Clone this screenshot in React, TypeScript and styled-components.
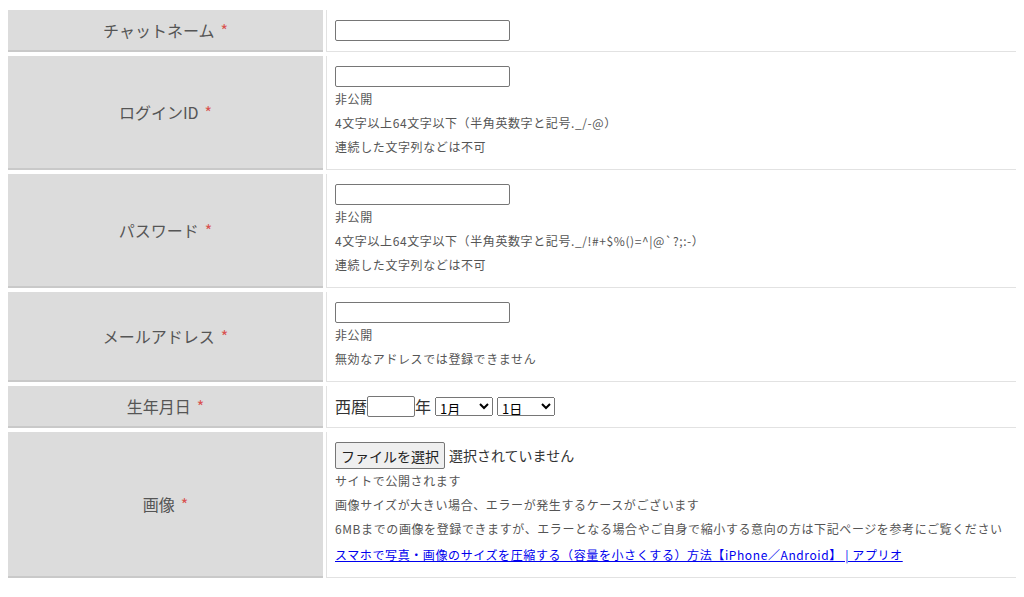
import React from "react";
import styled, { createGlobalStyle } from "styled-components";

const Global = createGlobalStyle`
  body { margin: 8px; background: #fff; font-family: "Noto Sans CJK JP", "Noto Sans", sans-serif; color: #444; }
`;
const Table = styled.table`
  border-spacing: 3px 4px;
  margin-top: -2px;
  margin-left: -3px;
  width: calc(100% + 9px);
`;
const Th = styled.th`
  width: 313px;
  background: #dcdcdc;
  border-bottom: 2px solid #c9c9c9;
  font-weight: normal;
  font-size: 16px;
  color: #555;
  text-align: center;
  vertical-align: middle;
`;
const Req = styled.span`
  color: #d9534f;
  margin-left: 6px;
`;
const Td = styled.td`
  padding: 10px 8px;
  border-bottom: 1px solid #e2e2e2;
  border-left: 1px solid #e2e2e2;
  font-size: 16px;
  vertical-align: top;
`;
const Input = styled.input<{ $w?: number }>`
  display: block;
  width: ${(p) => p.$w ?? 175}px;
  height: 21px;
  box-sizing: border-box;
  border: 1px solid #767676;
  border-radius: 2px;
  margin: 0;
`;
const Note = styled.div`
  font-size: 12px;
  line-height: 24px;
  letter-spacing: 0.6px;
  color: #555;
`;
const Inline = styled.div`
  display: flex;
  align-items: center;
  gap: 4px;
  line-height: 21px;
  color: #333;
`;
const Select = styled.select<{ $w: number }>`
  width: ${(p) => p.$w}px;
  height: 19px;
  font-size: 13px;
  font-family: "Noto Sans CJK JP", sans-serif;
  padding: 0;
`;
const FileBtn = styled.button`
  font-family: "Noto Sans CJK JP", sans-serif;
  font-size: 14px;
  height: 27px;
  padding: 0 5px;
  background: #efefef;
  border: 1px solid #767676;
  border-radius: 2px;
  color: #222;
`;
const Link = styled.a`
  font-size: 12px;
  line-height: 24px;
  letter-spacing: 0.6px;
  color: #0000ee;
  text-decoration: underline;
`;

const Label = ({ t }: { t: string }) => (
  <Th>
    {t}
    <Req>*</Req>
  </Th>
);

export default function App() {
  return (
    <>
      <Global />
      <Table>
        <tbody>
          <tr>
            <Label t="チャットネーム" />
            <Td><Input /></Td>
          </tr>
          <tr>
            <Label t="ログインID" />
            <Td>
              <Input />
              <Note>非公開</Note>
              <Note>4文字以上64文字以下（半角英数字と記号._/-@）</Note>
              <Note>連続した文字列などは不可</Note>
            </Td>
          </tr>
          <tr>
            <Label t="パスワード" />
            <Td>
              <Input />
              <Note>非公開</Note>
              <Note>4文字以上64文字以下（半角英数字と記号._/!#+$%()=^|@`?;:-）</Note>
              <Note>連続した文字列などは不可</Note>
            </Td>
          </tr>
          <tr>
            <Label t="メールアドレス" />
            <Td>
              <Input />
              <Note>非公開</Note>
              <Note>無効なアドレスでは登録できません</Note>
            </Td>
          </tr>
          <tr>
            <Label t="生年月日" />
            <Td>
              <Inline>
                <span>西暦</span>
                <Input $w={48} style={{ marginLeft: -4, marginRight: -4 }} />
                <span>年</span>
                <Select $w={58}><option>1月</option></Select>
                <Select $w={58}><option>1日</option></Select>
              </Inline>
            </Td>
          </tr>
          <tr>
            <Label t="画像" />
            <Td>
              <Inline>
                <FileBtn>ファイルを選択</FileBtn>
                <span style={{ fontSize: 14 }}>選択されていません</span>
              </Inline>
              <Note>サイトで公開されます</Note>
              <Note>画像サイズが大きい場合、エラーが発生するケースがございます</Note>
              <Note>6MBまでの画像を登録できますが、エラーとなる場合やご自身で縮小する意向の方は下記ページを参考にご覧ください</Note>
              <Link href="#">スマホで写真・画像のサイズを圧縮する（容量を小さくする）方法【iPhone／Android】 | アプリオ</Link>
            </Td>
          </tr>
        </tbody>
      </Table>
    </>
  );
}
